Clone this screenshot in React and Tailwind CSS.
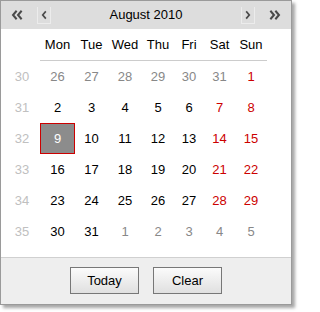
const weeks = [
  { n: 30, days: [[26, 0], [27, 0], [28, 0], [29, 0], [30, 0], [31, 0], [1, 1]] },
  { n: 31, days: [[2, 1], [3, 1], [4, 1], [5, 1], [6, 1], [7, 1], [8, 1]] },
  { n: 32, days: [[9, 1], [10, 1], [11, 1], [12, 1], [13, 1], [14, 1], [15, 1]] },
  { n: 33, days: [[16, 1], [17, 1], [18, 1], [19, 1], [20, 1], [21, 1], [22, 1]] },
  { n: 34, days: [[23, 1], [24, 1], [25, 1], [26, 1], [27, 1], [28, 1], [29, 1]] },
  { n: 35, days: [[30, 1], [31, 1], [1, 0], [2, 0], [3, 0], [4, 0], [5, 0]] },
];

const names = ["Mon", "Tue", "Wed", "Thu", "Fri", "Sat", "Sun"];

const Chevron = ({ dir, double }) => {
  const flip = dir === "right" ? "scale(-1,1) translate(-14,0)" : "";
  return (
    <svg width="14" height="10" viewBox="0 0 14 10" className="block">
      <g transform={flip} fill="none" stroke="#4a4a4a" strokeWidth="2" strokeLinecap="square">
        {double ? (
          <>
            <polyline points="5,1.5 2,5 5,8.5" />
            <polyline points="10,1.5 7,5 10,8.5" />
          </>
        ) : (
          <polyline points="8.5,1.5 5.5,5 8.5,8.5" />
        )}
      </g>
    </svg>
  );
};

const dayColor = (inMonth, col) => {
  if (!inMonth) return "text-[#888]";
  if (col >= 5) return "text-[#cc0000]";
  return "text-black";
};

const App = () => {
  return (
    <div className="w-[298px] h-[312px] bg-white font-['Liberation_Sans',Arial,sans-serif] text-[13px]">
      <div className="w-[292px] h-[305px] border border-[#9a9a9a] bg-white flex flex-col shadow-[3px_3px_3px_rgba(0,0,0,0.35)]">
        <div className="h-[28px] bg-[#dddddd] flex items-center px-[8px]">
          <button className="w-[16px] h-[16px] flex items-center justify-center ml-[1px]">
            <Chevron dir="left" double />
          </button>
          <button className="w-[14px] h-[17px] ml-[11px] flex items-center justify-center border-x border-b border-[#ececec]">
            <Chevron dir="left" />
          </button>
          <div className="flex-1 text-center text-black">August 2010</div>
          <button className="w-[14px] h-[17px] mr-[11px] flex items-center justify-center border-x border-b border-[#ececec]">
            <Chevron dir="right" />
          </button>
          <button className="w-[16px] h-[16px] flex items-center justify-center mr-[1px]">
            <Chevron dir="right" double />
          </button>
        </div>

        <div className="h-[228px] bg-white">
          <div className="grid grid-cols-[39px_35px_33px_34px_32px_30px_31px_32px]">
            <div className="h-[32px]" />
            {names.map((d) => (
              <div key={d} className="h-[32px] flex items-center justify-center border-b border-[#cccccc] text-black">
                {d}
              </div>
            ))}
            {weeks.map((w) => (
              <div key={w.n} className="contents">
                <div className="h-[31px] flex items-center justify-center pl-[3px] text-[#c0c0c0]">{w.n}</div>
                {w.days.map(([d, inMonth], i) =>
                  w.n === 32 && i === 0 ? (
                    <div key={i} className="h-[31px] flex items-center justify-center bg-[#8c8c8c] border border-[#cc0000] text-white">
                      {d}
                    </div>
                  ) : (
                    <div key={i} className={`h-[31px] flex items-center justify-center ${dayColor(inMonth, i)}`}>
                      {d}
                    </div>
                  )
                )}
              </div>
            ))}
          </div>
        </div>

        <div className="flex-1 bg-[#eeeeee] border-t border-[#d0d0d0] flex items-center justify-center gap-[14px] pb-[1px]">
          <button className="w-[69px] h-[27px] border border-[#777] bg-linear-to-b from-[#fbfbfb] to-[#e0e0e0] text-black">
            Today
          </button>
          <button className="w-[69px] h-[27px] border border-[#777] bg-linear-to-b from-[#fbfbfb] to-[#e0e0e0] text-black">
            Clear
          </button>
        </div>
      </div>
    </div>
  );
};

export default App;
